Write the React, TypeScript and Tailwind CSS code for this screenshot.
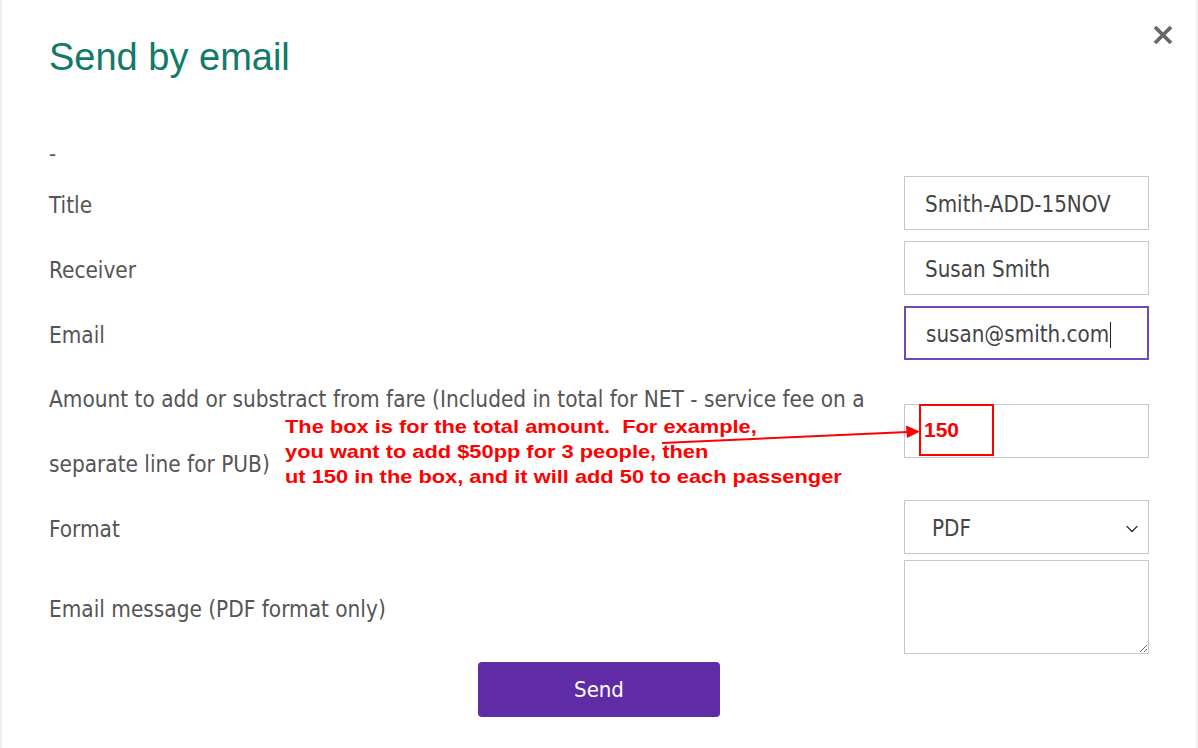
import { ChevronDown } from "lucide-react";

const labelFont = "font-['DejaVu_Sans_Condensed','DejaVu_Sans',sans-serif]";

function Row({ label, className, children }: { label: React.ReactNode; className: string; children: React.ReactNode }) {
    return (
        <div className={`flex items-center justify-between ${className}`}>
            <div className="flex-1 pt-[5px] text-[22.4px] text-[#555] pr-8">{label}</div>
            <div className="w-[245px] h-[54px]">{children}</div>
        </div>
    );
}

function TextBox({ value, focused }: { value: string; focused?: boolean }) {
    return (
        <div
            className={`h-full flex items-center pl-5 pt-[3px] text-[22.2px] text-[#444] ${
                focused ? "border-2 border-[#7048b8]" : "border-[1.5px] border-[#c8c8c8]"
            }`}
        >
            {value}
            {focused && <span className="w-px h-[26px] bg-[#222] ml-px" />}
        </div>
    );
}

export default function App() {
    return (
        <div className={`relative w-[1198px] h-[748px] bg-white overflow-hidden border-l-2 border-r-2 border-[#efefef] ${labelFont}`}>
            <div className="flex items-start justify-between pl-[47px] pr-[18px] pt-[34px]">
                <h1 className="font-['Liberation_Sans',Arial,sans-serif] text-[38px] leading-[46px] text-[#117a68]">Send by email</h1>
                <button className="mt-[-14px] p-1 text-[#666]" aria-label="Close">
                    <svg width="22" height="22" viewBox="0 0 22 22">
                        <path d="M3 3 L19 19 M19 3 L3 19" stroke="currentColor" strokeWidth="3.8" strokeLinecap="butt" />
                    </svg>
                </button>
            </div>

            <div className="pl-[47px] pr-[47px]">
                <div className="mt-[62px] h-[24px] text-[22px] leading-[24px] text-[#555]">-</div>

                <Row label="Title" className="mt-[10px]">
                    <TextBox value="Smith-ADD-15NOV" />
                </Row>
                <Row label="Receiver" className="mt-[11px]">
                    <TextBox value="Susan Smith" />
                </Row>
                <Row label="Email" className="mt-[11px]">
                    <TextBox value="susan@smith.com" focused />
                </Row>
                <Row
                    label={
                        <p className="leading-[65px] -mt-[4px]">
                            Amount to add or substract from fare (Included in total for NET - service fee on a separate line for PUB)
                        </p>
                    }
                    className="mt-[6px] h-[130px]"
                >
                    <div className="h-full border-[1.5px] border-[#c8c8c8]" />
                </Row>
                <Row label="Format" className="mt-[4px]">
                    <div className="h-full flex items-center justify-between pl-[27px] pr-[6px] pt-[3px] text-[22.2px] text-[#444] border-[1.5px] border-[#c8c8c8]">
                        PDF
                        <ChevronDown size={20} strokeWidth={1.6} className="text-[#333]" />
                    </div>
                </Row>
                <div className="mt-[6px] flex items-center justify-between h-[94px]">
                    <div className="flex-1 pt-[5px] text-[22.4px] text-[#555]">Email message (PDF format only)</div>
                    <textarea className="w-[245px] h-[94px] border-[1.5px] border-[#c8c8c8] resize" />
                </div>

                <div className="mt-[8px] flex justify-center">
                    <button className="w-[242px] h-[55px] rounded-[4px] bg-[#5f2ca6] text-white text-[22px]">Send</button>
                </div>
            </div>

            {/* annotation overlay */}
            <div className="absolute left-[283px] top-[414px] origin-left scale-x-[1.18] font-['Liberation_Sans',Arial,sans-serif] font-bold text-[18.5px] leading-[25px] text-[#ff0000] whitespace-nowrap">
                <p>The box is for the total amount.&nbsp; For example,</p>
                <p>you want to add $50pp for 3 people, then</p>
                <p>ut 150 in the box, and it will add 50 to each passenger</p>
            </div>
            <svg className="absolute left-0 top-0" width="1196" height="748">
                <line x1="660" y1="443" x2="906" y2="432" stroke="#ff0000" strokeWidth="2" />
                <path d="M918 431.5 L904 425.5 L905 438 Z" fill="#ff0000" />
            </svg>
            <div className="absolute left-[917px] top-[404px] w-[75px] h-[52px] border-2 border-[#ff0000] flex items-center pl-[3px] font-['Liberation_Sans',Arial,sans-serif] font-bold text-[21px] text-[#ff0000]">
                150
            </div>
        </div>
    );
}
